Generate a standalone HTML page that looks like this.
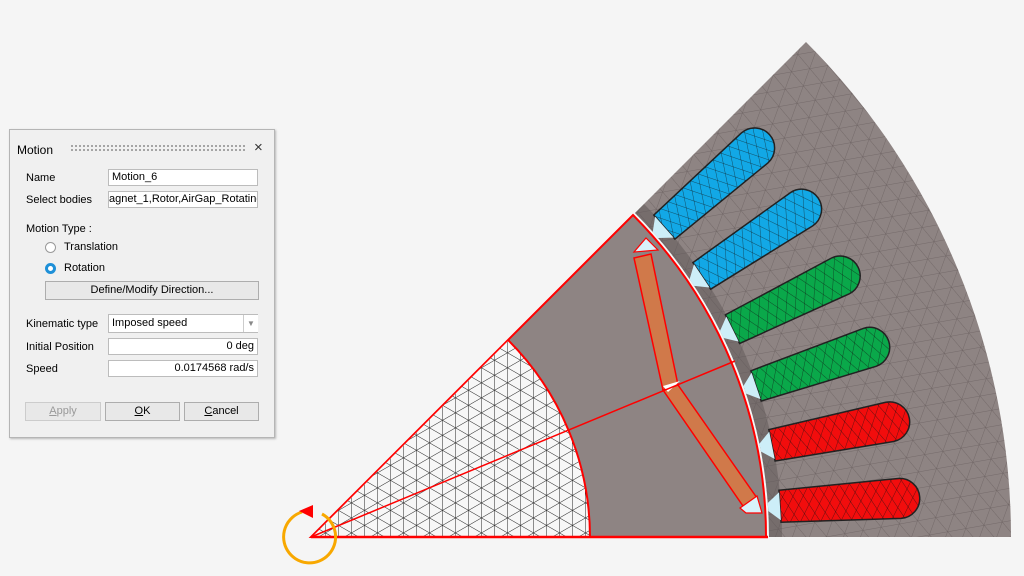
<!DOCTYPE html>
<html><head><meta charset="utf-8"><style>
body{margin:0;width:1024px;height:576px;background:#f5f5f5;overflow:hidden;position:relative;font-family:"Liberation Sans",sans-serif;font-size:11px;color:#000}
svg{position:absolute;left:0;top:0}
.dlg{position:absolute;left:9px;top:129px;width:264px;height:307px;background:#f0f0f0;border:1px solid #b5b5b5;box-shadow:1px 1px 2px rgba(0,0,0,.25)}
.a{position:absolute}
.inp{position:absolute;background:#fff;border:1px solid #bcbcbc;height:17px;box-sizing:border-box;line-height:15px;padding:0 3px;overflow:hidden;white-space:nowrap}
.btn{position:absolute;border:1px solid #adadad;background:#e8e8e8;height:19px;box-sizing:border-box;text-align:center;line-height:17px}
.rad{position:absolute;width:11px;height:11px;border-radius:50%;box-sizing:border-box}
</style></head><body>
<svg width="1024" height="576" viewBox="0 0 1024 576">
<defs>
<pattern id="l1" width="13" height="13" patternUnits="userSpaceOnUse"><line x1="0" y1="0" x2="0" y2="13" stroke="#222" stroke-width="1"/></pattern>
<pattern id="l2" width="13" height="13" patternUnits="userSpaceOnUse" patternTransform="rotate(60)"><line x1="0" y1="0" x2="0" y2="13" stroke="#222" stroke-width="1"/></pattern>
<pattern id="l3" width="13" height="13" patternUnits="userSpaceOnUse" patternTransform="rotate(-60)"><line x1="0" y1="0" x2="0" y2="13" stroke="#222" stroke-width="1"/></pattern>
<pattern id="s1" width="16" height="16" patternUnits="userSpaceOnUse" patternTransform="rotate(20)"><line x1="0" y1="0" x2="0" y2="16" stroke="#5a5050" stroke-width="0.7"/></pattern>
<pattern id="s2" width="16" height="16" patternUnits="userSpaceOnUse" patternTransform="rotate(80)"><line x1="0" y1="0" x2="0" y2="16" stroke="#5a5050" stroke-width="0.7"/></pattern>
<pattern id="s3" width="16" height="16" patternUnits="userSpaceOnUse" patternTransform="rotate(-40)"><line x1="0" y1="0" x2="0" y2="16" stroke="#5a5050" stroke-width="0.7"/></pattern>
<pattern id="c1" width="9" height="9" patternUnits="userSpaceOnUse" patternTransform="rotate(30)"><line x1="0" y1="0" x2="0" y2="9" stroke="#111" stroke-width="0.6"/></pattern>
<pattern id="c2" width="9" height="9" patternUnits="userSpaceOnUse" patternTransform="rotate(-30)"><line x1="0" y1="0" x2="0" y2="9" stroke="#111" stroke-width="0.6"/></pattern>
<pattern id="c3" width="9" height="9" patternUnits="userSpaceOnUse" patternTransform="rotate(90)"><line x1="0" y1="0" x2="0" y2="9" stroke="#111" stroke-width="0.6"/></pattern>
<clipPath id="stator"><path d="M769 537 L1011 537 A700 700 0 0 0 806 42 L635 213 A458 458 0 0 1 769 537Z"/></clipPath>
<clipPath id="inner"><path d="M311 537 L590 537 A279 279 0 0 0 508 340 Z"/></clipPath>
<g id="slot"><path d="M470 -16 L590 -20 A20 20 0 0 1 590 20 L470 16 Z"/></g>
<g id="tip"><path d="M458 -4 L470 -14 L470 14 L458 4Z"/></g>
</defs>
<path d="M769 537 L1011 537 A700 700 0 0 0 806 42 L635 213 A458 458 0 0 1 769 537Z" fill="#8e8483"/>
<g clip-path="url(#stator)" opacity="0.7"><rect x="600" y="40" width="420" height="500" fill="url(#s1)"/><rect x="600" y="40" width="420" height="500" fill="url(#s2)"/><rect x="600" y="40" width="420" height="500" fill="url(#s3)"/></g>
<path d="M635 213 A458 458 0 0 1 769 537 L782 537 A471 471 0 0 0 644 204Z" fill="#5e5555" opacity="0.5"/>
<g stroke="#222" stroke-width="1.5">
<g transform="translate(311 537) rotate(-3.75)"><use href="#slot" fill="#f20d0d"/><use href="#slot" fill="url(#c1)" stroke="none"/><use href="#slot" fill="url(#c2)" stroke="none"/></g>
<g transform="translate(311 537) rotate(-11.25)"><use href="#slot" fill="#f20d0d"/><use href="#slot" fill="url(#c1)" stroke="none"/><use href="#slot" fill="url(#c2)" stroke="none"/></g>
<g transform="translate(311 537) rotate(-18.75)"><use href="#slot" fill="#0aa84a"/><use href="#slot" fill="url(#c1)" stroke="none"/><use href="#slot" fill="url(#c2)" stroke="none"/></g>
<g transform="translate(311 537) rotate(-26.25)"><use href="#slot" fill="#0aa84a"/><use href="#slot" fill="url(#c1)" stroke="none"/><use href="#slot" fill="url(#c2)" stroke="none"/></g>
<g transform="translate(311 537) rotate(-33.75)"><use href="#slot" fill="#12a8e6"/><use href="#slot" fill="url(#c1)" stroke="none"/><use href="#slot" fill="url(#c2)" stroke="none"/></g>
<g transform="translate(311 537) rotate(-41.25)"><use href="#slot" fill="#12a8e6"/><use href="#slot" fill="url(#c1)" stroke="none"/><use href="#slot" fill="url(#c2)" stroke="none"/></g>
</g>
<g fill="#cdeef8">
<use href="#tip" transform="translate(311 537) rotate(-3.75)"/>
<use href="#tip" transform="translate(311 537) rotate(-11.25)"/>
<use href="#tip" transform="translate(311 537) rotate(-18.75)"/>
<use href="#tip" transform="translate(311 537) rotate(-26.25)"/>
<use href="#tip" transform="translate(311 537) rotate(-33.75)"/>
<use href="#tip" transform="translate(311 537) rotate(-41.25)"/>
</g>
<path d="M311 537 L766 537 A455 455 0 0 0 633 215 Z" fill="#8e8483" stroke="#f00" stroke-width="2"/>
<path d="M311 537 L590 537 A279 279 0 0 0 508 340 Z" fill="#f7f7f7"/>
<g clip-path="url(#inner)"><rect x="300" y="330" width="300" height="220" fill="url(#l1)"/><rect x="300" y="330" width="300" height="220" fill="url(#l2)"/><rect x="300" y="330" width="300" height="220" fill="url(#l3)"/></g>
<path d="M590 537 A279 279 0 0 0 508 340" fill="none" stroke="#f00" stroke-width="2"/>
<path d="M634 258 L651 254 L678 385 L663 390 Z" fill="#d0794a" stroke="#f00" stroke-width="1.5"/>
<path d="M663 390 L678 385 L757 498 L743 506 Z" fill="#d0794a" stroke="#f00" stroke-width="1.5"/>
<path d="M634 252 L646 238 L658 250 Z" fill="#d8f2fb" stroke="#f00" stroke-width="1.2"/>
<path d="M740 508 L757 496 L762 513 L746 513 Z" fill="#d8f2fb" stroke="#f00" stroke-width="1.2"/>
<path d="M663 386 L680 381 L668 392Z" fill="#fff"/>
<line x1="311" y1="537" x2="735" y2="361" stroke="#f00" stroke-width="1.5"/>
<line x1="311" y1="537" x2="633" y2="215" stroke="#f00" stroke-width="1.5"/>
<line x1="311" y1="537" x2="768" y2="537" stroke="#f00" stroke-width="2.5"/>
<path d="M302 512 A26 26 0 1 0 322 514" fill="none" stroke="#f8a800" stroke-width="3"/>
<path d="M299 511 L313 505 L313 518 Z" fill="#f00"/>
</svg>
<div class="dlg">
<div class="a" style="left:7px;top:13px;font-size:12px">Motion</div>
<div class="a" style="left:60px;top:14px;width:177px;height:8px;background-image:radial-gradient(circle,#8a8a8a 0.8px,transparent 1px);background-size:4px 4px"></div>
<div class="a" style="left:244px;top:9px;font-size:15px;color:#333">×</div>
<div class="a" style="left:16px;top:42px">Name</div>
<div class="inp" style="left:98px;top:39px;width:150px">Motion_6</div>
<div class="a" style="left:16px;top:64px">Select bodies</div>
<div class="inp" style="left:98px;top:61px;width:150px;text-indent:-3px">agnet_1,Rotor,AirGap_Rotating</div>
<div class="a" style="left:16px;top:93px">Motion Type :</div>
<div class="rad" style="left:35px;top:112px;border:1px solid #999;background:#fff"></div>
<div class="a" style="left:54px;top:111px">Translation</div>
<div class="rad" style="left:35px;top:133px;border:3px solid #1e90d8;background:#fff"></div>
<div class="a" style="left:54px;top:132px">Rotation</div>
<div class="btn" style="left:35px;top:151px;width:214px">Define/Modify Direction...</div>
<div class="a" style="left:16px;top:188px">Kinematic type</div>
<div class="inp" style="left:98px;top:184px;width:150px;height:19px;line-height:17px">Imposed speed</div>
<div class="a" style="left:233px;top:185px;width:14px;height:17px;border-left:1px solid #ccc;background:#fff;text-align:center;color:#888;font-size:8px;line-height:17px">▼</div>
<div class="a" style="left:16px;top:211px">Initial Position</div>
<div class="inp" style="left:98px;top:208px;width:150px;text-align:right">0 deg</div>
<div class="a" style="left:16px;top:233px">Speed</div>
<div class="inp" style="left:98px;top:230px;width:150px;text-align:right">0.0174568 rad/s</div>
<div class="btn" style="left:15px;top:272px;width:76px;color:#999;border-color:#ccc"><u>A</u>pply</div>
<div class="btn" style="left:95px;top:272px;width:75px"><u>O</u>K</div>
<div class="btn" style="left:174px;top:272px;width:75px"><u>C</u>ancel</div>
</div>
</body></html>
